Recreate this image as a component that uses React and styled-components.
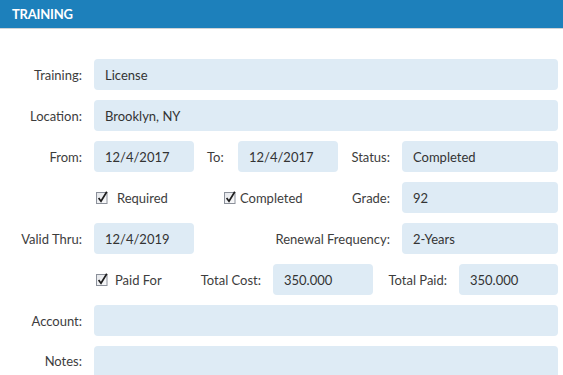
import React from "react";
import styled, { createGlobalStyle } from "styled-components";

const Global = createGlobalStyle`
  html, body { margin: 0; padding: 0; background: #fff; }
  body { font-family: Lato, "Noto Sans", sans-serif; color: #3a3a3a; overflow: hidden; }
  * { box-sizing: border-box; }
`;

const Panel = styled.div`
  width: 563px;
  height: 375px;
  overflow: hidden;
  background: #fff;
`;

const Header = styled.div`
  height: 29px;
  background: #1d80bb;
  border-bottom: 1px solid #cfd3d6;
  color: #fff;
  font-weight: 700;
  font-size: 13px;
  letter-spacing: -0.2px;
  display: flex;
  align-items: center;
  padding: 0 12px 1px;
`;

const Form = styled.div`
  display: flex;
  flex-direction: column;
  gap: 10px;
  padding: 30px 5px 0 0;
`;

const Row = styled.div`
  display: flex;
  align-items: center;
  height: 31px;
`;

const Label = styled.label`
  flex: 0 0 ${(p) => p.$w}px;
  text-align: ${(p) => (p.$left ? "left" : "right")};
  padding-right: ${(p) => (p.$left ? 0 : 12)}px;
  padding-left: ${(p) => p.$pl || 0}px;
  font-size: 13px;
  color: #3d3d3d;
  white-space: nowrap;
`;

const Field = styled.input`
  flex: ${(p) => (p.$w ? `0 0 ${p.$w}px` : "1 1 auto")};
  min-width: 0;
  height: 31px;
  border: none;
  border-radius: 4px;
  background: #deebf5;
  padding: 0 11px;
  font-family: Lato, "Noto Sans", sans-serif;
  font-size: 13px;
  color: #333;
  outline: none;
`;

const NotesField = styled.textarea`
  flex: 1 1 auto;
  height: 60px;
  border: none;
  border-radius: 4px;
  background: #deebf5;
  resize: none;
  align-self: flex-start;
`;

const NotesRow = styled(Row)`
  align-items: flex-start;
  height: auto;
  & > label { line-height: 31px; }
`;

const Check = styled.div`
  flex: 0 0 ${(p) => p.$w}px;
  display: flex;
  align-items: center;
  gap: ${(p) => p.$gap}px;
  padding-left: 2px;
  font-size: 13px;
  color: #3d3d3d;
  white-space: nowrap;
`;

const Box = () => (
  <svg width="13" height="13" viewBox="0 0 13 13">
    <defs>
      <linearGradient id="bx" x1="0" y1="0" x2="1" y2="1">
        <stop offset="0" stopColor="#e4e6ea" />
        <stop offset="1" stopColor="#fbfbfc" />
      </linearGradient>
    </defs>
    <rect x="0.5" y="1.5" width="10.5" height="11" fill="url(#bx)" stroke="#8b909a" />
    <path d="M2.6 7 L5 10.2 L10.8 0.8" fill="none" stroke="#1e1e1e" strokeWidth="1.7" />
  </svg>
);

const CheckItem = ({ w, gap, children }) => (
  <Check $w={w} $gap={gap}>
    <Box />
    <span>{children}</span>
  </Check>
);

export default function App() {
  return (
    <Panel>
      <Global />
      <Header>TRAINING</Header>
      <Form>
        <Row>
          <Label $w={94}>Training:</Label>
          <Field readOnly defaultValue="License" />
        </Row>
        <Row>
          <Label $w={94}>Location:</Label>
          <Field readOnly defaultValue="Brooklyn, NY" />
        </Row>
        <Row>
          <Label $w={94}>From:</Label>
          <Field $w={100} readOnly defaultValue="12/4/2017" />
          <Label $w={44} $left $pl={13}>To:</Label>
          <Field $w={100} readOnly defaultValue="12/4/2017" />
          <Label $w={64}>Status:</Label>
          <Field readOnly defaultValue="Completed" />
        </Row>
        <Row>
          <Label $w={94} />
          <CheckItem w={128} gap={8}>Required</CheckItem>
          <CheckItem w={116} gap={3}>Completed</CheckItem>
          <Label $w={64}>Grade:</Label>
          <Field readOnly defaultValue="92" />
        </Row>
        <Row>
          <Label $w={94}>Valid Thru:</Label>
          <Field $w={100} readOnly defaultValue="12/4/2019" />
          <Label $w={208}>Renewal Frequency:</Label>
          <Field readOnly defaultValue="2-Years" />
        </Row>
        <Row>
          <Label $w={94} />
          <CheckItem w={106} gap={6}>Paid For</CheckItem>
          <Label $w={73}>Total Cost:</Label>
          <Field $w={100} readOnly defaultValue="350.000" />
          <Label $w={86}>Total Paid:</Label>
          <Field readOnly defaultValue="350.000" />
        </Row>
        <Row>
          <Label $w={94}>Account:</Label>
          <Field readOnly defaultValue="" />
        </Row>
        <NotesRow>
          <Label $w={94}>Notes:</Label>
          <NotesField readOnly defaultValue="" />
        </NotesRow>
      </Form>
    </Panel>
  );
}
